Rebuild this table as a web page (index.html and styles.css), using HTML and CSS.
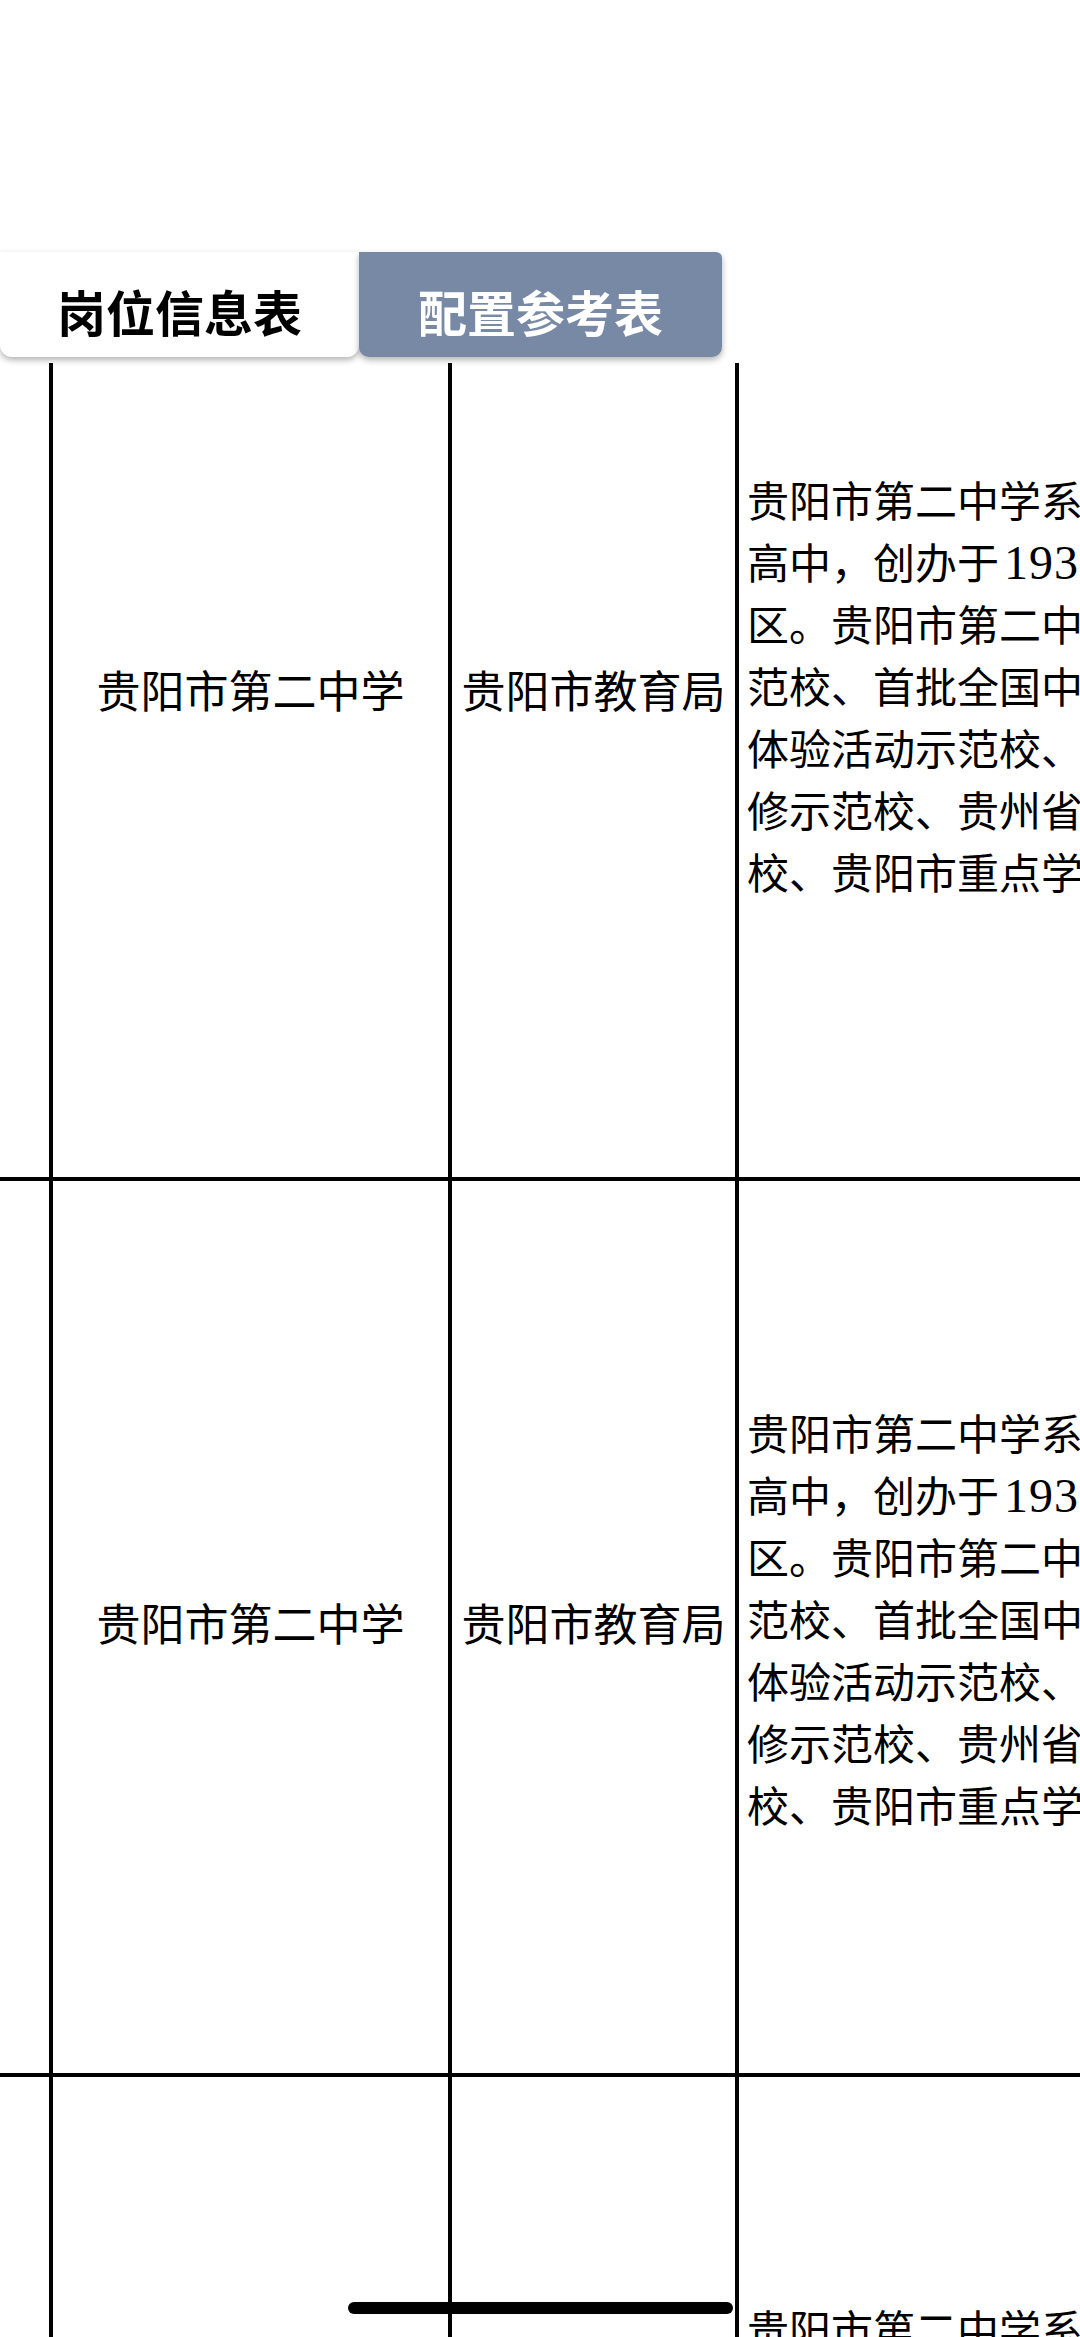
FILE: index.html
```html
<!DOCTYPE html>
<html lang="zh-CN">
<head>
<meta charset="utf-8">
<title>岗位信息表</title>
<link rel="stylesheet" href="styles.css">
</head>
<body>
<div class="page">
  <div class="status"></div>
  <nav class="tabs">
    <div class="tab tab-active">岗位信息表</div>
    <div class="tab tab-alt">配置参考表</div>
  </nav>
  <div class="table-viewport">
    <div class="table">
      <div class="row row-first">
        <div class="cell cell-idx"></div>
        <div class="cell cell-name">贵阳市第二中学</div>
        <div class="cell cell-dept">贵阳市教育局</div>
        <div class="cell cell-desc">
          <div class="desc">
            <p>贵阳市第二中学系贵州省首批省级示范性普通</p>
            <p>高中，创办于<span class="num">1939</span>年，位于贵阳市云岩区中心城</p>
            <p>区。贵阳市第二中学是全国现代教育技术实验示</p>
            <p>范校、首批全国中小学中华优秀文化艺术传承学</p>
            <p>体验活动示范校、全国青少年校园足球特色学校、</p>
            <p>修示范校、贵州省文明校园、贵州省一类示范性学</p>
            <p>校、贵阳市重点学校。</p>
          </div>
        </div>
      </div>
      <div class="row">
        <div class="cell cell-idx"></div>
        <div class="cell cell-name">贵阳市第二中学</div>
        <div class="cell cell-dept">贵阳市教育局</div>
        <div class="cell cell-desc">
          <div class="desc">
            <p>贵阳市第二中学系贵州省首批省级示范性普通</p>
            <p>高中，创办于<span class="num">1939</span>年，位于贵阳市云岩区中心城</p>
            <p>区。贵阳市第二中学是全国现代教育技术实验示</p>
            <p>范校、首批全国中小学中华优秀文化艺术传承学</p>
            <p>体验活动示范校、全国青少年校园足球特色学校、</p>
            <p>修示范校、贵州省文明校园、贵州省一类示范性学</p>
            <p>校、贵阳市重点学校。</p>
          </div>
        </div>
      </div>
      <div class="row">
        <div class="cell cell-idx"></div>
        <div class="cell cell-name">贵阳市第二中学</div>
        <div class="cell cell-dept">贵阳市教育局</div>
        <div class="cell cell-desc">
          <div class="desc">
            <p>贵阳市第二中学系贵州省首批省级示范性普通</p>
            <p>高中，创办于<span class="num">1939</span>年，位于贵阳市云岩区中心城</p>
            <p>区。贵阳市第二中学是全国现代教育技术实验示</p>
            <p>范校、首批全国中小学中华优秀文化艺术传承学</p>
            <p>体验活动示范校、全国青少年校园足球特色学校、</p>
            <p>修示范校、贵州省文明校园、贵州省一类示范性学</p>
            <p>校、贵阳市重点学校。</p>
          </div>
        </div>
      </div>
    </div>
  </div>
</div>
<div class="home-indicator"></div>
</body>
</html>
```

FILE: styles.css
```css
html, body {
  margin: 0;
  padding: 0;
  overflow: hidden;
  background: #ffffff;
}

body {
  width: 1080px;
  height: 2337px;
  font-family: "Liberation Serif", "Noto Sans CJK SC", sans-serif;
  color: #000000;
}

.page {
  width: 1080px;
  height: 2337px;
  overflow: hidden;
}

.status {
  height: 252px;
}

.tabs {
  display: flex;
  height: 105px;
  position: relative;
  z-index: 2;
}

.tab {
  display: flex;
  align-items: center;
  justify-content: center;
  box-sizing: border-box;
  padding-top: 12px;
  font-family: "Noto Sans CJK SC", sans-serif;
  font-weight: 700;
  font-size: 49px;
  line-height: 1;
  box-shadow: 0 3px 6px rgba(0, 0, 0, 0.3);
}

.tab-active {
  width: 359px;
  background: #ffffff;
  color: #000000;
  border-radius: 0 0 12px 12px;
}

.tab-alt {
  width: 363px;
  background: #7889a5;
  color: #ffffff;
  border-radius: 0 6px 10px 10px;
}

.table-viewport {
  margin-top: 6px;
  height: 1974px;
  overflow: hidden;
}

.table {
  margin-top: -152px;
  width: 1640px;
}

.row {
  display: flex;
  height: 892px;
  border-bottom: 4px solid #000000;
}

.row-first {
  height: 966px;
}

.cell {
  display: flex;
  align-items: center;
  box-sizing: border-box;
  flex-shrink: 0;
}

.cell-idx {
  width: 49px;
}

.cell-name,
.cell-dept {
  justify-content: center;
  border-left: 4px solid #000000;
  font-size: 44px;
  line-height: 1.3;
  white-space: nowrap;
}

.cell-name {
  width: 399px;
}

.cell-dept {
  width: 287px;
}

.cell-desc {
  width: 900px;
  border-left: 4px solid #000000;
  padding-left: 8px;
  padding-bottom: 10px;
  font-size: 42px;
  line-height: 62px;
}

.desc p {
  margin: 0;
  white-space: nowrap;
}

.num {
  font-size: 48px;
  line-height: 1;
  letter-spacing: 1px;
  margin-left: 5px;
}

.home-indicator {
  position: fixed;
  left: 348px;
  top: 2302px;
  width: 385px;
  height: 12px;
  border-radius: 6px;
  background: #000000;
  z-index: 5;
}
```
